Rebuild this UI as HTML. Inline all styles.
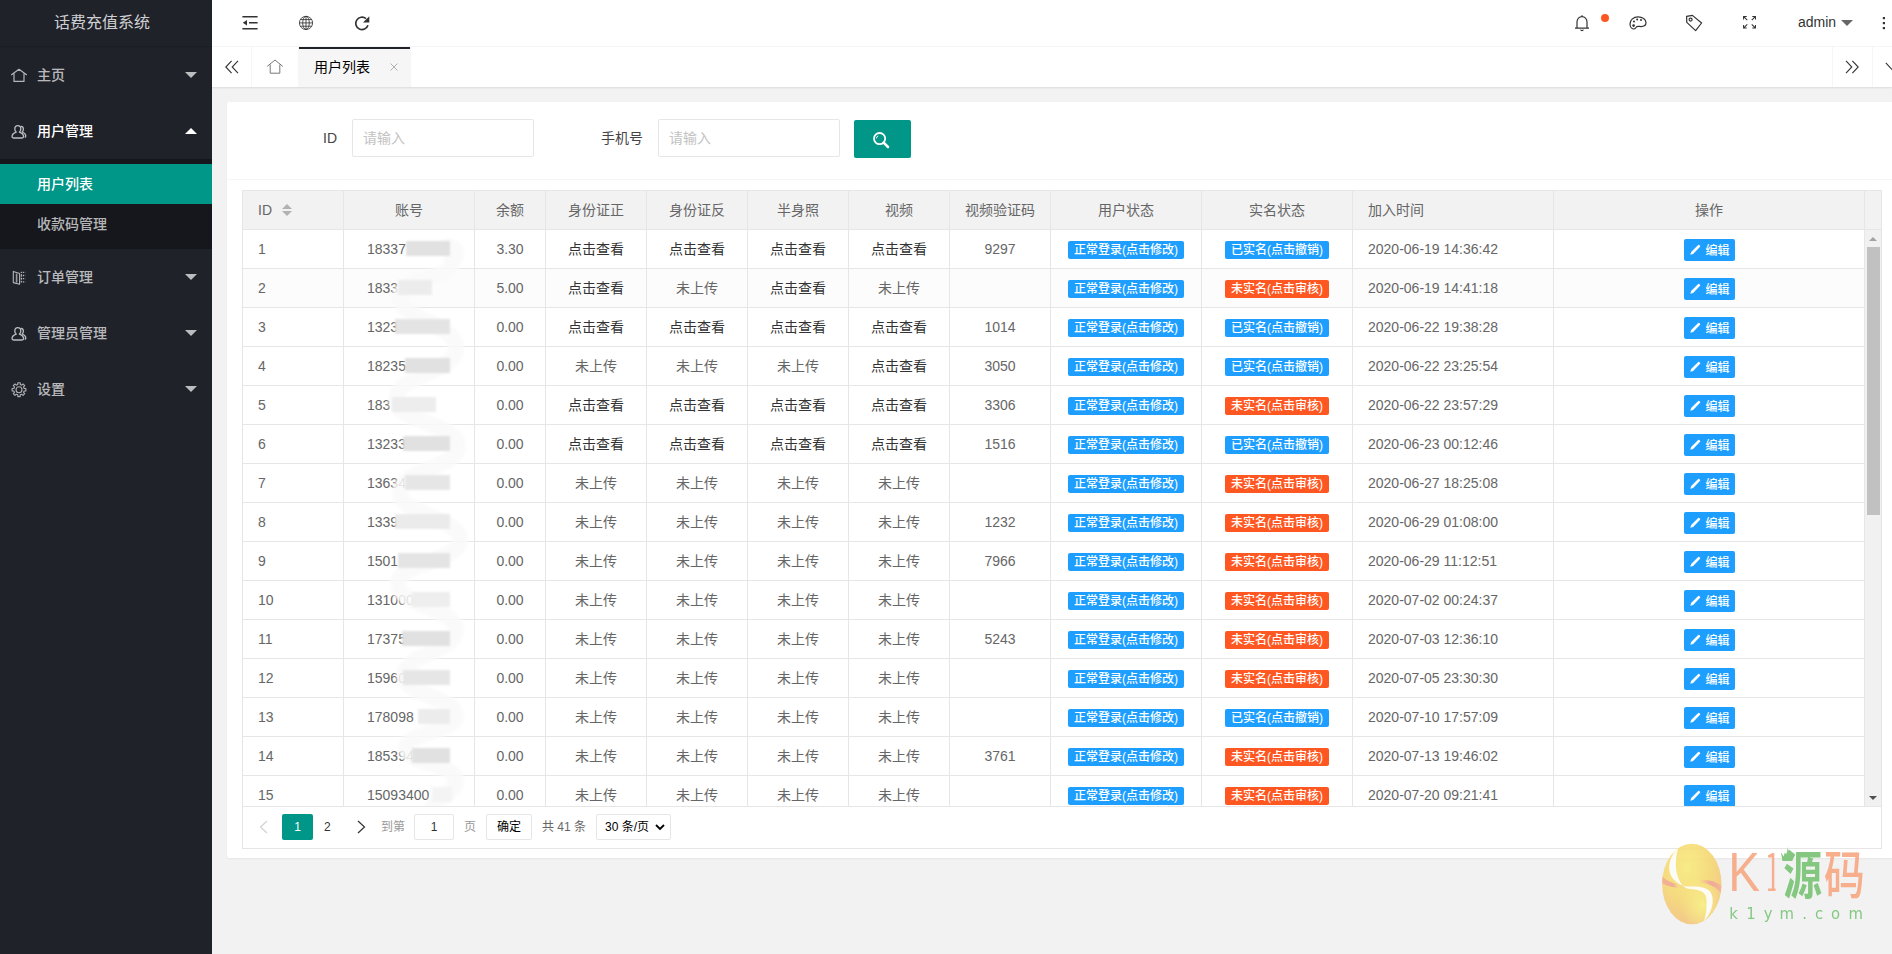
<!DOCTYPE html>
<html lang="zh-CN">
<head>
<meta charset="utf-8">
<title>话费充值系统</title>
<style>
*{box-sizing:border-box;}
html,body{margin:0;padding:0;}
body{width:1892px;height:954px;overflow:hidden;position:relative;background:#f2f2f2;color:#666;
 font:14px/24px "Liberation Sans","Noto Sans CJK SC",sans-serif;}
a{text-decoration:none;color:inherit;}
ul{list-style:none;margin:0;padding:0;}
/* ---------- side ---------- */
.side{position:absolute;left:0;top:0;width:212px;height:954px;background:#20222A;color:rgba(255,255,255,.7);overflow:hidden;}
.logo{position:absolute;left:-8px;top:-3px;width:220px;height:49px;line-height:52px;text-align:center;font-size:16px;color:rgba(255,255,255,.8);box-shadow:0 1px 2px 0 rgba(0,0,0,.15);}
.nav{position:absolute;left:-8px;top:47px;width:220px;}
.nav .item{position:relative;height:56px;line-height:57px;font-weight:500;padding-left:45px;font-size:14px;}
.nav .item.open{color:#fff;}
.nav .item svg.ic{position:absolute;left:19px;top:21px;}
.nav .item .more{position:absolute;right:15px;top:25px;width:0;height:0;border:6px solid transparent;border-top-color:rgba(255,255,255,.7);}
.nav .item.open .more{top:19px;border-top-color:transparent;border-bottom-color:#fff;}
.nav .child{background:rgba(0,0,0,.3);padding:5px 0;}
.nav .child li{height:40px;line-height:40px;font-weight:500;padding-left:45px;}
.nav .child li.this{background:#009688;color:#fff;}
/* ---------- header ---------- */
.header{position:absolute;left:212px;top:0;width:1680px;height:47px;background:#fff;border-bottom:1px solid #f6f6f6;}
.header svg{position:absolute;}
.tabs{position:absolute;left:212px;top:47px;width:1680px;height:40px;background:#fff;box-shadow:0 1px 2px 0 rgba(0,0,0,.1);}
.tabs .ctl{position:absolute;top:0;width:40px;height:40px;border-left:1px solid #f6f6f6;}
.tabs .ctl.l{left:0;border-left:none;border-right:1px solid #f6f6f6;}
.tabs svg{position:absolute;}
.tab-home{position:absolute;left:40px;top:0;width:46px;height:40px;}
.tab-this{position:absolute;left:86px;top:0;width:113px;height:40px;background:#f6f6f6;line-height:40px;color:#000;padding-left:16px;}
.tab-this:before{content:"";position:absolute;left:1px;top:0;width:111px;height:2px;background:#20222A;}
.tab-this .x{position:absolute;left:92px;top:16px;}
/* ---------- card ---------- */
.card{position:absolute;left:227px;top:102px;width:1670px;height:756px;background:#fff;border-radius:2px;box-shadow:0 1px 2px 0 rgba(0,0,0,.05);}
.card-h{position:absolute;left:0;top:0;width:100%;height:78px;border-bottom:1px solid #f6f6f6;color:#333;}
.lab{position:absolute;top:17px;height:38px;line-height:38px;text-align:right;width:95px;color:#444;}
.inp{position:absolute;top:17px;width:182px;height:38px;border:1px solid #e6e6e6;border-radius:2px;background:#fff;line-height:36px;padding-left:10px;color:#c2c2c2;font-size:14px;}
.sbtn{position:absolute;left:627px;top:18px;width:57px;height:38px;background:#009688;border-radius:2px;}
/* ---------- table ---------- */
.tv{position:absolute;left:15px;top:88px;width:1640px;height:659px;border:1px solid #e6e6e6;}
table{border-collapse:separate;border-spacing:0;table-layout:fixed;}
th,td{height:39px;padding:0;border-right:1px solid #e6e6e6;border-bottom:1px solid #e6e6e6;text-align:center;font-weight:normal;font-size:14px;line-height:28px;color:#666;white-space:nowrap;overflow:hidden;}
.thead{position:absolute;left:0;top:0;width:1638px;height:39px;background:#f2f2f2;border-bottom:1px solid #e6e6e6;overflow:hidden;}
.thead th{background:#f2f2f2;}
.tbody{position:absolute;left:0;top:39px;width:1622px;height:576px;overflow:hidden;}
.c-id{text-align:left;padding-left:15px;}
.c-acc{text-align:left;padding-left:23px;}
.c-time{text-align:left;padding-left:15px;}
.lk{color:#333;}
td.bx{font-size:0;line-height:0;padding-top:2px;}
tbody tr.hv td{background:#fcfcfc;}
.badge{display:inline-block;height:18px;line-height:18px;padding:0 6px;font-size:12px;color:#fff;border-radius:2px;vertical-align:middle;position:relative;top:0;font-weight:500;}
.blue{background:#1E9FFF;}
.orange{background:#FF5722;}
.btn-xs{display:inline-block;height:22px;line-height:24px;margin-left:1px;padding:0 5.5px 0 5px;font-size:12px;color:#fff;background:#1E9FFF;border-radius:2px;vertical-align:middle;position:relative;top:0px;font-weight:500;}
.btn-xs .pen{vertical-align:-1px;margin-right:4.5px;}
.sort{position:absolute;left:39px;top:12px;width:10px;height:14px;}
.sort:before,.sort:after{content:"";position:absolute;left:0;width:0;height:0;border:5px solid transparent;}
.sort:before{top:-4px;border-bottom-color:#b2b2b2;}
.sort:after{top:8px;border-top-color:#b2b2b2;}
/* scrollbar */
.sb{position:absolute;left:1622px;top:39px;width:16px;height:576px;background:#f1f1f1;}
.sb .thumb{position:absolute;left:2px;top:17px;width:13px;height:268px;background:#c1c1c1;}
.sb .up{position:absolute;left:4px;top:7px;width:0;height:0;border:4px solid transparent;border-top:none;border-bottom:4px solid #a3a3a3;}
.sb .dn{position:absolute;left:4px;bottom:6px;width:0;height:0;border:4px solid transparent;border-bottom:none;border-top:4px solid #505050;}
/* page */
.page{position:absolute;left:0;top:615px;width:1638px;height:42px;border-top:1px solid #e6e6e6;font-size:12px;color:#333;}
.page > *{position:absolute;top:7px;height:26px;line-height:26px;}
.page .cur{left:39px;width:31px;background:#009688;color:#fff;text-align:center;border-radius:2px;}
.page .box{border:1px solid #e6e6e6;border-radius:2px;background:#fff;text-align:center;line-height:24px;}
/* watermark */
.wm{position:absolute;left:1650px;top:835px;}
</style>
</head>
<body>
<div class="side">
  <div class="logo">话费充值系统</div>
  <ul class="nav">
    <li class="item"><svg class="ic" width="16" height="16" viewBox="0 0 16 16"><path d="M0.5 6.7 L8 1.3 L15.5 6.7 M3 5.4 V13.4 H13 V5.4" fill="none" stroke="#b4b5b8" stroke-width="1.2" stroke-linejoin="round" stroke-linecap="round"/></svg>主页<span class="more"></span></li>
    <li class="item open"><svg class="ic" width="16" height="16" viewBox="0 0 16 16"><g fill="none" stroke="#bcbdbf" stroke-width="1.3" stroke-linejoin="round" stroke-linecap="round"><path d="M6.8 1.6 C4.9 1.6 3.8 3 3.8 4.9 C3.8 6.2 4.3 7.4 5.2 8.1 C3 8.9 1 10.6 1 12.6 C1 13.6 1.6 14 2.6 14 H11 C12 14 12.6 13.6 12.6 12.6 C12.6 10.6 10.6 8.9 8.4 8.1 C9.3 7.4 9.8 6.2 9.8 4.9 C9.8 3 8.7 1.6 6.8 1.6 Z"/><path d="M10.2 2.3 C11.6 2.5 12.4 3.7 12.4 5.2 C12.4 6.4 11.9 7.4 11.2 8 C13 8.8 14.8 10.3 14.8 12 C14.8 12.6 14.6 13 14.2 13.2"/></g></svg>用户管理<span class="more"></span></li>
    <li><ul class="child"><li class="this">用户列表</li><li>收款码管理</li></ul></li>
    <li class="item"><svg class="ic" width="16" height="16" viewBox="0 0 16 16"><g fill="none" stroke="#b4b5b8" stroke-width="1.1" stroke-linejoin="round"><path d="M2.3 1.4 L8.6 3.5 V14.2 L2.3 12.6 Z"/><path d="M5.6 3.6 V12.6" stroke-width="1.6" stroke="#9a9b9f"/><path d="M9.8 2.3 H14.2 M9.8 5.5 H14.2 M9.8 8.7 H14.2 M9.8 11.9 H14.2" stroke-dasharray="1.3 0.8" stroke-width="1.3"/><path d="M10.4 2 V13" stroke-dasharray="1 1.2" stroke-width="1"/></g></svg>订单管理<span class="more"></span></li>
    <li class="item"><svg class="ic" width="16" height="16" viewBox="0 0 16 16"><g fill="none" stroke="#bcbdbf" stroke-width="1.3" stroke-linejoin="round" stroke-linecap="round"><path d="M6.8 1.6 C4.9 1.6 3.8 3 3.8 4.9 C3.8 6.2 4.3 7.4 5.2 8.1 C3 8.9 1 10.6 1 12.6 C1 13.6 1.6 14 2.6 14 H11 C12 14 12.6 13.6 12.6 12.6 C12.6 10.6 10.6 8.9 8.4 8.1 C9.3 7.4 9.8 6.2 9.8 4.9 C9.8 3 8.7 1.6 6.8 1.6 Z"/><path d="M10.2 2.3 C11.6 2.5 12.4 3.7 12.4 5.2 C12.4 6.4 11.9 7.4 11.2 8 C13 8.8 14.8 10.3 14.8 12 C14.8 12.6 14.6 13 14.2 13.2"/></g></svg>管理员管理<span class="more"></span></li>
    <li class="item"><svg class="ic" width="16" height="16" viewBox="0 0 16 16"><g fill="none" stroke="#b0b1b4" stroke-width="1.1" stroke-linejoin="round" transform="translate(0 -0.6)"><circle cx="8" cy="8.3" r="3"/><path d="M6.76 3.15 L6.80 1.40 L9.20 1.40 L9.24 3.15 L10.77 3.78 L12.03 2.57 L13.73 4.27 L12.52 5.53 L13.15 7.06 L14.90 7.10 L14.90 9.50 L13.15 9.54 L12.52 11.07 L13.73 12.33 L12.03 14.03 L10.77 12.82 L9.24 13.45 L9.20 15.20 L6.80 15.20 L6.76 13.45 L5.23 12.82 L3.97 14.03 L2.27 12.33 L3.48 11.07 L2.85 9.54 L1.10 9.50 L1.10 7.10 L2.85 7.06 L3.48 5.53 L2.27 4.27 L3.97 2.57 L5.23 3.78 Z"/></g></svg>设置<span class="more"></span></li>
  </ul>
</div>

<div class="header">
  <!-- flexible -->
  <svg style="left:30px;top:15px" width="16" height="16" viewBox="0 0 16 16"><g fill="none" stroke="#333" stroke-width="1.4"><path d="M0.4 1.8 H15.6 M7 7.8 H15.6 M0.4 13.8 H15.6"/></g><path d="M0.8 7.8 L5 5 V10.6 Z" fill="#333"/></svg>
  <!-- website -->
  <svg style="left:86px;top:15px" width="16" height="16" viewBox="0 0 16 16"><g fill="none" stroke="#333" stroke-width="0.85"><circle cx="8" cy="7.9" r="6.6"/><ellipse cx="8" cy="7.9" rx="3.3" ry="6.6"/><path d="M8 1.3 V14.5 M1.4 7.9 H14.6 M2.4 4.6 H13.6 M2.4 11.2 H13.6"/></g></svg>
  <!-- refresh -->
  <svg style="left:142px;top:15px" width="16" height="16" viewBox="0 0 16 16"><path d="M13.93 10.2 A6.2 6.2 0 1 1 11.98 3.65" fill="none" stroke="#333" stroke-width="1.7"/><path d="M15.3 1.2 V7.6 H9 Z" fill="#333"/></svg>
  <!-- bell -->
  <svg style="left:1361px;top:14px" width="18" height="18" viewBox="0 0 18 18"><g fill="none" stroke="#333" stroke-width="1.2" stroke-linejoin="round"><path d="M2 14.2 H16 M4 14 V8 A5 5.4 0 0 1 14 8 V14"/><path d="M7.6 15.6 A1.5 1.5 0 0 0 10.4 15.6"/><path d="M9 1.2 V2.6"/></g></svg>
  <span style="position:absolute;left:1389px;top:14px;width:8px;height:8px;border-radius:50%;background:#FF5722"></span>
  <!-- theme -->
  <svg style="left:1417px;top:15px" width="18" height="16" viewBox="0 0 18 16"><g fill="none" stroke="#333" stroke-width="1.2" stroke-linejoin="round"><path d="M9 1.8 C4.6 1.8 1 5 1 9 C1 11.6 2.6 13.8 4.6 14 C6.4 14.2 6.6 12.6 7.6 11.8 C8.8 10.8 10.4 11.6 12 11.6 C15 11.6 17 10 17 7.6 C17 4.2 13.4 1.8 9 1.8 Z"/></g><g fill="#333"><circle cx="4.6" cy="10.6" r="1.3"/><circle cx="5" cy="6.6" r="1"/><circle cx="8.2" cy="4.4" r="1"/><circle cx="12" cy="5" r="1"/></g></svg>
  <!-- note -->
  <svg style="left:1473px;top:14px" width="18" height="18" viewBox="0 0 18 18"><g fill="none" stroke="#333" stroke-width="1.2" stroke-linejoin="round"><path d="M1.6 2.4 L7.4 1.4 L16.6 9 L10.6 16.6 L1.8 8.4 Z"/><circle cx="5.6" cy="5.6" r="1.5"/></g></svg>
  <!-- fullscreen -->
  <svg style="left:1531px;top:16px" width="13" height="12.5" viewBox="0 0 14 14" preserveAspectRatio="none"><g fill="none" stroke="#333" stroke-width="1.1"><path d="M0.6 4 V0.6 H4 M0.8 0.8 L4.6 4.6"/><path d="M10 0.6 H13.4 V4 M13.2 0.8 L9.4 4.6"/><path d="M0.6 10 V13.4 H4 M0.8 13.2 L4.6 9.4"/><path d="M10 13.4 H13.4 V10 M13.2 13.2 L9.4 9.4"/></g></svg>
  <span style="position:absolute;left:1586px;top:0;line-height:45px;color:#333;font-size:14px">admin</span>
  <span style="position:absolute;left:1629px;top:20px;width:0;height:0;border:6px solid transparent;border-top-color:#666"></span>
  <svg style="left:1669px;top:16px" width="6" height="14" viewBox="0 0 6 14"><g fill="#333"><rect x="1.8" y="1" width="2.2" height="2.2"/><rect x="1.8" y="6" width="2.2" height="2.2"/><rect x="1.8" y="11" width="2.2" height="2.2"/></g></svg>
</div>

<div class="tabs">
  <div class="ctl l"><svg style="left:13px;top:13px" width="14" height="14" viewBox="0 0 14 14"><path d="M6.6 0.8 L0.8 7 L6.6 13.2 M13 0.8 L7.2 7 L13 13.2" fill="none" stroke="#333" stroke-width="1.1"/></svg></div>
  <div class="tab-home"><svg style="left:15px;top:12px" width="16" height="16" viewBox="0 0 16 16"><path d="M0.2 7.4 L8 1 L15.8 7.4 M3.2 5.6 V14.2 H12.8 V5.6" fill="none" stroke="#777" stroke-width="1" stroke-linejoin="round"/></svg></div>
  <div class="tab-this">用户列表<svg class="x" width="8" height="8" viewBox="0 0 8 8" style="position:absolute"><path d="M0.5 0.5 L7.5 7.5 M7.5 0.5 L0.5 7.5" stroke="#b0b0b0" stroke-width="1"/></svg></div>
  <div class="ctl" style="left:1620px"><svg style="left:12px;top:13px" width="14" height="14" viewBox="0 0 14 14"><path d="M1 0.8 L6.8 7 L1 13.2 M7.4 0.8 L13.2 7 L7.4 13.2" fill="none" stroke="#333" stroke-width="1.1"/></svg></div>
  <div class="ctl" style="left:1660px"><svg style="left:12px;top:15px" width="16" height="10" viewBox="0 0 16 10"><path d="M0.8 0.8 L8 8.6 L15.2 0.8" fill="none" stroke="#333" stroke-width="1.1"/></svg></div>
</div>

<div class="card">
  <div class="card-h">
    <div class="lab" style="left:15px">ID</div>
    <div class="inp" style="left:125px">请输入</div>
    <div class="lab" style="left:321px">手机号</div>
    <div class="inp" style="left:431px">请输入</div>
    <div class="sbtn"><svg style="position:absolute;left:18px;top:11px" width="18" height="18" viewBox="0 0 18 18"><circle cx="7.6" cy="7.6" r="5.6" fill="none" stroke="#fff" stroke-width="1.8"/><path d="M11.6 11.6 L16 16" stroke="#fff" stroke-width="2.6" stroke-linecap="round"/><path d="M4.4 7.4 A3.2 3.2 0 0 1 6.2 4.8" fill="none" stroke="#fff" stroke-width="1"/></svg></div>
  </div>
  <div class="tv">
    <div class="thead">
      <table style="width:1622px"><colgroup><col style="width:101px"><col style="width:131px"><col style="width:71px"><col style="width:101px"><col style="width:101px"><col style="width:101px"><col style="width:101px"><col style="width:101px"><col style="width:151px"><col style="width:151px"><col style="width:201px"><col></colgroup>
      <thead><tr><th class="c-id" style="position:relative">ID<span class="sort"></span></th><th>账号</th><th>余额</th><th>身份证正</th><th>身份证反</th><th>半身照</th><th>视频</th><th>视频验证码</th><th>用户状态</th><th>实名状态</th><th class="c-time">加入时间</th><th>操作</th></tr></thead></table>
    </div>
    <div class="tbody">
      <table style="width:1622px"><colgroup><col style="width:101px"><col style="width:131px"><col style="width:71px"><col style="width:101px"><col style="width:101px"><col style="width:101px"><col style="width:101px"><col style="width:101px"><col style="width:151px"><col style="width:151px"><col style="width:201px"><col></colgroup>
      <tbody>
<tr><td class="c-id">1</td><td class="c-acc">18337</td><td>3.30</td><td><a class="lk">点击查看</a></td><td><a class="lk">点击查看</a></td><td><a class="lk">点击查看</a></td><td><a class="lk">点击查看</a></td><td>9297</td><td class="bx"><span class="badge blue">正常登录(点击修改)</span></td><td class="bx"><span class="badge blue">已实名(点击撤销)</span></td><td class="c-time">2020-06-19 14:36:42</td><td class="bx"><a class="btn-xs"><svg class="pen" viewBox="0 0 12 12" width="12" height="12"><path d="M1.3 10.7 L2.1 7.9 L9.2 0.9 Q9.8 0.5 10.3 1.0 L11.0 1.7 Q11.5 2.2 11.1 2.8 L4.1 9.9 Z" fill="#fff"/></svg>编辑</a></td></tr>
<tr class="hv"><td class="c-id">2</td><td class="c-acc">1833</td><td>5.00</td><td><a class="lk">点击查看</a></td><td>未上传</td><td><a class="lk">点击查看</a></td><td>未上传</td><td></td><td class="bx"><span class="badge blue">正常登录(点击修改)</span></td><td class="bx"><span class="badge orange">未实名(点击审核)</span></td><td class="c-time">2020-06-19 14:41:18</td><td class="bx"><a class="btn-xs"><svg class="pen" viewBox="0 0 12 12" width="12" height="12"><path d="M1.3 10.7 L2.1 7.9 L9.2 0.9 Q9.8 0.5 10.3 1.0 L11.0 1.7 Q11.5 2.2 11.1 2.8 L4.1 9.9 Z" fill="#fff"/></svg>编辑</a></td></tr>
<tr><td class="c-id">3</td><td class="c-acc">1323</td><td>0.00</td><td><a class="lk">点击查看</a></td><td><a class="lk">点击查看</a></td><td><a class="lk">点击查看</a></td><td><a class="lk">点击查看</a></td><td>1014</td><td class="bx"><span class="badge blue">正常登录(点击修改)</span></td><td class="bx"><span class="badge blue">已实名(点击撤销)</span></td><td class="c-time">2020-06-22 19:38:28</td><td class="bx"><a class="btn-xs"><svg class="pen" viewBox="0 0 12 12" width="12" height="12"><path d="M1.3 10.7 L2.1 7.9 L9.2 0.9 Q9.8 0.5 10.3 1.0 L11.0 1.7 Q11.5 2.2 11.1 2.8 L4.1 9.9 Z" fill="#fff"/></svg>编辑</a></td></tr>
<tr><td class="c-id">4</td><td class="c-acc">18235</td><td>0.00</td><td>未上传</td><td>未上传</td><td>未上传</td><td><a class="lk">点击查看</a></td><td>3050</td><td class="bx"><span class="badge blue">正常登录(点击修改)</span></td><td class="bx"><span class="badge blue">已实名(点击撤销)</span></td><td class="c-time">2020-06-22 23:25:54</td><td class="bx"><a class="btn-xs"><svg class="pen" viewBox="0 0 12 12" width="12" height="12"><path d="M1.3 10.7 L2.1 7.9 L9.2 0.9 Q9.8 0.5 10.3 1.0 L11.0 1.7 Q11.5 2.2 11.1 2.8 L4.1 9.9 Z" fill="#fff"/></svg>编辑</a></td></tr>
<tr><td class="c-id">5</td><td class="c-acc">183</td><td>0.00</td><td><a class="lk">点击查看</a></td><td><a class="lk">点击查看</a></td><td><a class="lk">点击查看</a></td><td><a class="lk">点击查看</a></td><td>3306</td><td class="bx"><span class="badge blue">正常登录(点击修改)</span></td><td class="bx"><span class="badge orange">未实名(点击审核)</span></td><td class="c-time">2020-06-22 23:57:29</td><td class="bx"><a class="btn-xs"><svg class="pen" viewBox="0 0 12 12" width="12" height="12"><path d="M1.3 10.7 L2.1 7.9 L9.2 0.9 Q9.8 0.5 10.3 1.0 L11.0 1.7 Q11.5 2.2 11.1 2.8 L4.1 9.9 Z" fill="#fff"/></svg>编辑</a></td></tr>
<tr><td class="c-id">6</td><td class="c-acc">13233</td><td>0.00</td><td><a class="lk">点击查看</a></td><td><a class="lk">点击查看</a></td><td><a class="lk">点击查看</a></td><td><a class="lk">点击查看</a></td><td>1516</td><td class="bx"><span class="badge blue">正常登录(点击修改)</span></td><td class="bx"><span class="badge blue">已实名(点击撤销)</span></td><td class="c-time">2020-06-23 00:12:46</td><td class="bx"><a class="btn-xs"><svg class="pen" viewBox="0 0 12 12" width="12" height="12"><path d="M1.3 10.7 L2.1 7.9 L9.2 0.9 Q9.8 0.5 10.3 1.0 L11.0 1.7 Q11.5 2.2 11.1 2.8 L4.1 9.9 Z" fill="#fff"/></svg>编辑</a></td></tr>
<tr><td class="c-id">7</td><td class="c-acc">13634</td><td>0.00</td><td>未上传</td><td>未上传</td><td>未上传</td><td>未上传</td><td></td><td class="bx"><span class="badge blue">正常登录(点击修改)</span></td><td class="bx"><span class="badge orange">未实名(点击审核)</span></td><td class="c-time">2020-06-27 18:25:08</td><td class="bx"><a class="btn-xs"><svg class="pen" viewBox="0 0 12 12" width="12" height="12"><path d="M1.3 10.7 L2.1 7.9 L9.2 0.9 Q9.8 0.5 10.3 1.0 L11.0 1.7 Q11.5 2.2 11.1 2.8 L4.1 9.9 Z" fill="#fff"/></svg>编辑</a></td></tr>
<tr><td class="c-id">8</td><td class="c-acc">1339</td><td>0.00</td><td>未上传</td><td>未上传</td><td>未上传</td><td>未上传</td><td>1232</td><td class="bx"><span class="badge blue">正常登录(点击修改)</span></td><td class="bx"><span class="badge orange">未实名(点击审核)</span></td><td class="c-time">2020-06-29 01:08:00</td><td class="bx"><a class="btn-xs"><svg class="pen" viewBox="0 0 12 12" width="12" height="12"><path d="M1.3 10.7 L2.1 7.9 L9.2 0.9 Q9.8 0.5 10.3 1.0 L11.0 1.7 Q11.5 2.2 11.1 2.8 L4.1 9.9 Z" fill="#fff"/></svg>编辑</a></td></tr>
<tr><td class="c-id">9</td><td class="c-acc">1501</td><td>0.00</td><td>未上传</td><td>未上传</td><td>未上传</td><td>未上传</td><td>7966</td><td class="bx"><span class="badge blue">正常登录(点击修改)</span></td><td class="bx"><span class="badge orange">未实名(点击审核)</span></td><td class="c-time">2020-06-29 11:12:51</td><td class="bx"><a class="btn-xs"><svg class="pen" viewBox="0 0 12 12" width="12" height="12"><path d="M1.3 10.7 L2.1 7.9 L9.2 0.9 Q9.8 0.5 10.3 1.0 L11.0 1.7 Q11.5 2.2 11.1 2.8 L4.1 9.9 Z" fill="#fff"/></svg>编辑</a></td></tr>
<tr><td class="c-id">10</td><td class="c-acc">131000</td><td>0.00</td><td>未上传</td><td>未上传</td><td>未上传</td><td>未上传</td><td></td><td class="bx"><span class="badge blue">正常登录(点击修改)</span></td><td class="bx"><span class="badge orange">未实名(点击审核)</span></td><td class="c-time">2020-07-02 00:24:37</td><td class="bx"><a class="btn-xs"><svg class="pen" viewBox="0 0 12 12" width="12" height="12"><path d="M1.3 10.7 L2.1 7.9 L9.2 0.9 Q9.8 0.5 10.3 1.0 L11.0 1.7 Q11.5 2.2 11.1 2.8 L4.1 9.9 Z" fill="#fff"/></svg>编辑</a></td></tr>
<tr><td class="c-id">11</td><td class="c-acc">17375</td><td>0.00</td><td>未上传</td><td>未上传</td><td>未上传</td><td>未上传</td><td>5243</td><td class="bx"><span class="badge blue">正常登录(点击修改)</span></td><td class="bx"><span class="badge orange">未实名(点击审核)</span></td><td class="c-time">2020-07-03 12:36:10</td><td class="bx"><a class="btn-xs"><svg class="pen" viewBox="0 0 12 12" width="12" height="12"><path d="M1.3 10.7 L2.1 7.9 L9.2 0.9 Q9.8 0.5 10.3 1.0 L11.0 1.7 Q11.5 2.2 11.1 2.8 L4.1 9.9 Z" fill="#fff"/></svg>编辑</a></td></tr>
<tr><td class="c-id">12</td><td class="c-acc">15960</td><td>0.00</td><td>未上传</td><td>未上传</td><td>未上传</td><td>未上传</td><td></td><td class="bx"><span class="badge blue">正常登录(点击修改)</span></td><td class="bx"><span class="badge orange">未实名(点击审核)</span></td><td class="c-time">2020-07-05 23:30:30</td><td class="bx"><a class="btn-xs"><svg class="pen" viewBox="0 0 12 12" width="12" height="12"><path d="M1.3 10.7 L2.1 7.9 L9.2 0.9 Q9.8 0.5 10.3 1.0 L11.0 1.7 Q11.5 2.2 11.1 2.8 L4.1 9.9 Z" fill="#fff"/></svg>编辑</a></td></tr>
<tr><td class="c-id">13</td><td class="c-acc">178098</td><td>0.00</td><td>未上传</td><td>未上传</td><td>未上传</td><td>未上传</td><td></td><td class="bx"><span class="badge blue">正常登录(点击修改)</span></td><td class="bx"><span class="badge blue">已实名(点击撤销)</span></td><td class="c-time">2020-07-10 17:57:09</td><td class="bx"><a class="btn-xs"><svg class="pen" viewBox="0 0 12 12" width="12" height="12"><path d="M1.3 10.7 L2.1 7.9 L9.2 0.9 Q9.8 0.5 10.3 1.0 L11.0 1.7 Q11.5 2.2 11.1 2.8 L4.1 9.9 Z" fill="#fff"/></svg>编辑</a></td></tr>
<tr><td class="c-id">14</td><td class="c-acc">185394</td><td>0.00</td><td>未上传</td><td>未上传</td><td>未上传</td><td>未上传</td><td>3761</td><td class="bx"><span class="badge blue">正常登录(点击修改)</span></td><td class="bx"><span class="badge orange">未实名(点击审核)</span></td><td class="c-time">2020-07-13 19:46:02</td><td class="bx"><a class="btn-xs"><svg class="pen" viewBox="0 0 12 12" width="12" height="12"><path d="M1.3 10.7 L2.1 7.9 L9.2 0.9 Q9.8 0.5 10.3 1.0 L11.0 1.7 Q11.5 2.2 11.1 2.8 L4.1 9.9 Z" fill="#fff"/></svg>编辑</a></td></tr>
<tr><td class="c-id">15</td><td class="c-acc">15093400</td><td>0.00</td><td>未上传</td><td>未上传</td><td>未上传</td><td>未上传</td><td></td><td class="bx"><span class="badge blue">正常登录(点击修改)</span></td><td class="bx"><span class="badge orange">未实名(点击审核)</span></td><td class="c-time">2020-07-20 09:21:41</td><td class="bx"><a class="btn-xs"><svg class="pen" viewBox="0 0 12 12" width="12" height="12"><path d="M1.3 10.7 L2.1 7.9 L9.2 0.9 Q9.8 0.5 10.3 1.0 L11.0 1.7 Q11.5 2.2 11.1 2.8 L4.1 9.9 Z" fill="#fff"/></svg>编辑</a></td></tr>
      </tbody></table>
      <svg style="position:absolute;left:140px;top:0" width="90" height="577" viewBox="0 0 90 577"><defs><filter id="bl" x="-20%" y="-20%" width="140%" height="140%"><feGaussianBlur stdDeviation="0.9"/></filter><filter id="bl2" x="-20%" y="-5%" width="140%" height="110%"><feGaussianBlur stdDeviation="1.4"/></filter></defs><path d="M65 16 Q79 20 69 32 C69 49 17 49 17 66 C17 92 73 92 73 118 C73 144 13 144 13 170 C13 193 75 193 75 216 C75 239 17 239 17 262 C17 286 77 286 77 310 C77 332 15 332 15 354 C15 377 73 377 73 400 C73 423 21 423 21 446 C21 466 73 466 73 486 C73 502 23 502 23 518 C23 534 73 534 73 550 C73 566 49 566 49 582" fill="none" stroke="#f9f9f9" stroke-opacity="0.85" stroke-width="16" stroke-linecap="round" filter="url(#bl2)"/><rect x="23" y="11" width="44" height="15" fill="#e1e1e1" filter="url(#bl)"/><rect x="15" y="50" width="34" height="15" fill="#ececec" filter="url(#bl)"/><rect x="12" y="89" width="55" height="15" fill="#e4e4e4" filter="url(#bl)"/><rect x="22" y="128" width="45" height="15" fill="#e1e1e1" filter="url(#bl)"/><rect x="9" y="167" width="44" height="15" fill="#ededed" filter="url(#bl)"/><rect x="20" y="206" width="47" height="15" fill="#e1e1e1" filter="url(#bl)"/><rect x="22" y="245" width="45" height="15" fill="#e6e6e6" filter="url(#bl)"/><rect x="12" y="284" width="55" height="15" fill="#ebebeb" filter="url(#bl)"/><rect x="15" y="323" width="52" height="15" fill="#e4e4e4" filter="url(#bl)"/><rect x="29" y="362" width="38" height="15" fill="#eeeeee" filter="url(#bl)"/><rect x="19" y="401" width="48" height="15" fill="#e1e1e1" filter="url(#bl)"/><rect x="20" y="440" width="47" height="15" fill="#e6e6e6" filter="url(#bl)"/><rect x="35" y="479" width="32" height="15" fill="#ececec" filter="url(#bl)"/><rect x="29" y="518" width="38" height="15" fill="#e1e1e1" filter="url(#bl)"/><rect x="49" y="557" width="20" height="15" fill="#f4f4f4" filter="url(#bl)"/></svg>
    </div>
    <div class="sb"><span class="up"></span><span class="thumb"></span><span class="dn"></span></div>
    <div class="page">
      <svg style="left:16px;top:13px;height:14px" width="9" height="14" viewBox="0 0 9 14"><path d="M8 1 L1.5 7 L8 13" fill="none" stroke="#d2d2d2" stroke-width="1.2"/></svg>
      <span class="cur">1</span>
      <span style="left:81px">2</span>
      <svg style="left:114px;top:13px;height:14px" width="9" height="14" viewBox="0 0 9 14"><path d="M1 1 L7.5 7 L1 13" fill="none" stroke="#333" stroke-width="1.2"/></svg>
      <span style="left:138px;color:#999">到第</span>
      <span class="box" style="left:171px;width:40px">1</span>
      <span style="left:221px;color:#999">页</span>
      <span class="box" style="left:243px;width:46px;color:#000">确定</span>
      <span style="left:299px;color:#666">共 41 条</span>
      <span class="box" style="left:353px;width:75px;text-align:left;padding-left:8px;color:#000">30 条/页<svg style="position:absolute;right:5px;top:9px" width="10" height="7" viewBox="0 0 10 7"><path d="M1 1 L5 5 L9 1" fill="none" stroke="#000" stroke-width="1.8"/></svg></span>
    </div>
  </div>
</div>

<div class="wm">
<svg width="230" height="100" viewBox="1650 835 230 100">
  <defs>
    <radialGradient id="g1" cx="0.42" cy="0.3" r="0.75"><stop offset="0" stop-color="#f9ec7c"/><stop offset="0.55" stop-color="#f6d877"/><stop offset="1" stop-color="#f3c184"/></radialGradient>
    <radialGradient id="g2" cx="0.68" cy="0.76" r="0.35"><stop offset="0" stop-color="#f8ee80"/><stop offset="1" stop-color="#f8ee80" stop-opacity="0"/></radialGradient>
    <linearGradient id="g3" x1="0" y1="0" x2="1" y2="0"><stop offset="0" stop-color="#f2b08c"/><stop offset="0.45" stop-color="#f0a392" stop-opacity="0.9"/><stop offset="0.6" stop-color="#f3b890" stop-opacity="0.2"/><stop offset="1" stop-color="#f2b08c" stop-opacity="0"/></linearGradient>
    <linearGradient id="g4" x1="0" y1="0" x2="1" y2="0"><stop offset="0" stop-color="#f2b08c" stop-opacity="0"/><stop offset="0.5" stop-color="#ee9d96" stop-opacity="0.9"/><stop offset="1" stop-color="#f2b48a"/></linearGradient>
    <clipPath id="c1"><rect x="8.6" y="-45" width="9.4" height="50"/></clipPath>
    <clipPath id="cp"><ellipse cx="1691.8" cy="884" rx="29.7" ry="40.3"/></clipPath>
  </defs>
  <g opacity="0.92">
   <ellipse cx="1691.8" cy="884" rx="29.7" ry="40.3" fill="url(#g1)"/>
   <ellipse cx="1691.8" cy="884" rx="29.7" ry="40.3" fill="url(#g2)"/>
   <g clip-path="url(#cp)">
    <path d="M1660 874 C1665 880 1672 884.5 1690.1 886.5 L1690.1 888.5 C1676 889 1666 886 1660 882 Z" fill="url(#g3)"/>
    <path d="M1698.6 880.2 C1706 879 1716 881 1722.5 887 L1722.5 895 C1718 888 1710 883.5 1698.6 882.6 Z" fill="url(#g4)"/>
    <path d="M1678.6 846.6 C1673 853 1669.6 860 1669.2 866.6 C1669 873 1671 879 1679.6 884.2 C1684 886.4 1688 886.6 1692 886.6 C1698 886.6 1705 887 1709.4 890.8 C1712.4 894 1713 899 1712.6 903.1 C1712 909 1709 916 1704 921 C1706 915 1706.6 910 1706.6 901 C1706.6 896.5 1705 893.6 1702 891.8 C1698 889.6 1695 889.4 1690.1 889 C1686 888.6 1682.5 886 1680.4 882.4 C1677.5 877.5 1676 871 1675.9 865.4 C1675.8 859 1676.6 853 1678.6 846.6 Z" fill="#fefcf6"/>
   </g>
  </g>
  <g opacity="0.95">
   <text transform="translate(1728.3,890.9) scale(0.86,1)" font-family="Liberation Sans, sans-serif" font-size="55.3" fill="#f7ab88">K</text>
   <text clip-path="url(#c1)" transform="translate(1761.2,890.9) scale(0.8,1)" font-family="Noto Sans CJK SC, sans-serif" font-weight="300" font-size="51.5" fill="#f7ab88">1</text>
   <path d="M1780.9 852.2 L1783.6 856.6 L1784.8 852.4 L1786.6 854.4 L1787.4 846.8 L1788.2 854.4 L1790 852.4 L1791.2 856.6 L1793.9 852.2 L1792.4 861 H1782.4 Z" fill="#7fc57b"/>
   <text transform="translate(1783.2,893.9) scale(0.97,1.295)" font-family="Liberation Sans, Noto Sans CJK SC, sans-serif" font-size="40" font-weight="700" fill="#7fc57b">源</text>
   <text transform="translate(1823.9,893.9) scale(1.02,1.295)" font-family="Liberation Sans, Noto Sans CJK SC, sans-serif" font-size="40" font-weight="500" fill="#f7ab88">码</text>
   <text transform="scale(0.9,1)" text-anchor="middle" x="1926.1 1945.4 1964.7 1985.3 2005.1 2021.1 2039.6 2061.9" y="918.9" font-family="DejaVu Sans, Liberation Sans, sans-serif" font-size="16.5" fill="#80c67d">k1ym.com</text>
  </g>
</svg>
</div>
</body>
</html>
